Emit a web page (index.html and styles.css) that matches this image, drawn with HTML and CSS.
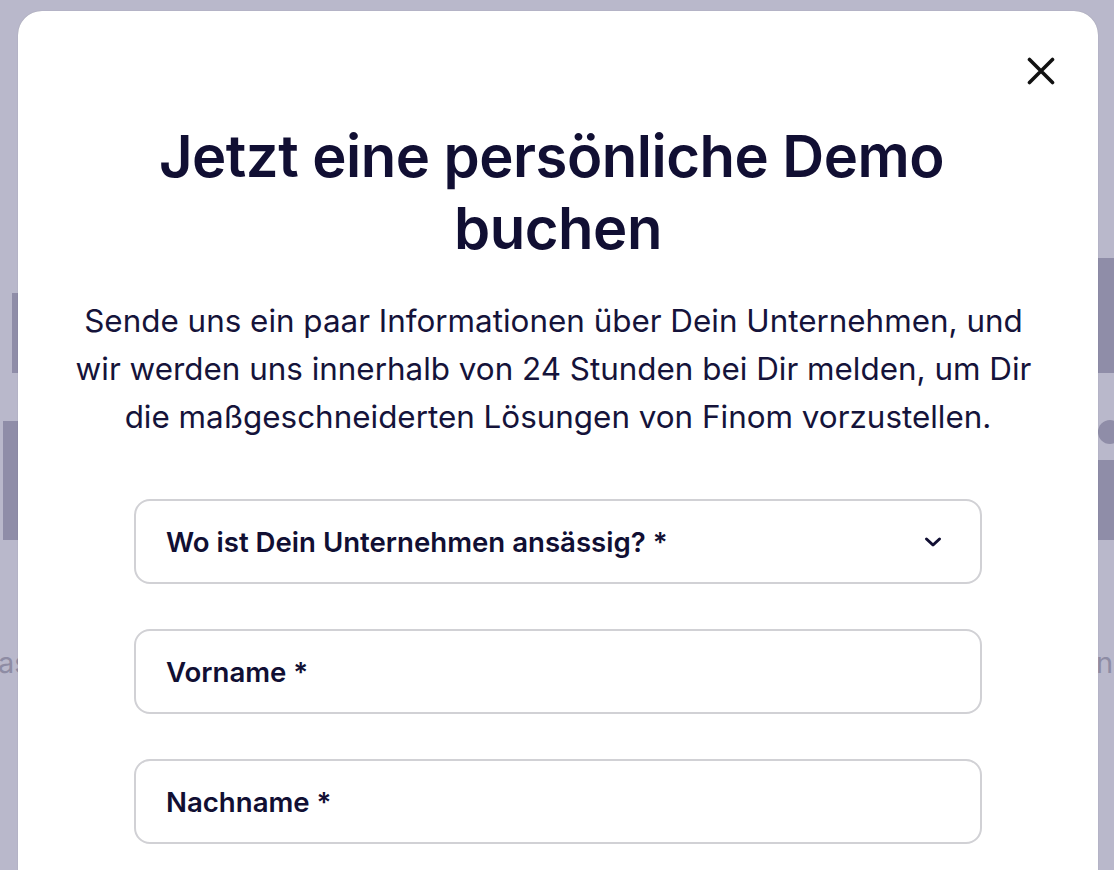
FILE: index.html
```html
<!DOCTYPE html>
<html lang="de">
<head>
<meta charset="utf-8">
<title>Demo buchen</title>
<link rel="stylesheet" href="styles.css">
</head>
<body>
<div class="backdrop" aria-hidden="true">
  <div class="bg-block bl1"></div>
  <div class="bg-block bl2"></div>
  <div class="bg-block br1"></div>
  <div class="bg-dot br-dot"></div>
  <div class="bg-block br2"></div>
  <span class="bg-text bt-left">as</span>
  <span class="bg-text bt-right">n</span>
</div>
<div class="modal">
  <button class="close" aria-label="Schließen">
    <svg width="28" height="28" viewBox="0 0 28 28"><path d="M2.5 2.5 L25.5 25.5 M25.5 2.5 L2.5 25.5" stroke="#111" stroke-width="3.6" stroke-linecap="round" fill="none"/></svg>
  </button>
  <h1 class="title"><span class="title-line1">Jetzt eine persönliche Demo</span>buchen</h1>
  <p class="lead"><span class="lead-line">Sende uns ein paar Informationen über Dein Unternehmen, und</span><span class="lead-line">wir werden uns innerhalb von 24 Stunden bei Dir melden, um Dir</span>die maßgeschneiderten Lösungen von Finom vorzustellen.</p>
  <form class="form">
    <div class="field select">
      <span class="label">Wo ist Dein Unternehmen ansässig? *</span>
      <svg class="chev" width="18" height="12" viewBox="0 0 18 12"><path d="M2.5 3 L9 9 L15.5 3" stroke="#110f33" stroke-width="3" stroke-linecap="round" stroke-linejoin="round" fill="none"/></svg>
    </div>
    <div class="field"><span class="label">Vorname *</span></div>
    <div class="field"><span class="label">Nachname *</span></div>
  </form>
</div>
</body>
</html>
```
FILE: styles.css
```css
html, body {
  margin: 0;
  padding: 0;
  height: 100%;
  overflow: hidden;
}
body {
  background: #b9b8cb;
  font-family: "Inter", "Lato", "DejaVu Sans", sans-serif;
  color: #110f33;
  position: relative;
}
.backdrop {
  position: absolute;
  inset: 0;
}
.bg-block {
  position: absolute;
  background: #8f8da8;
}
.bl1 { left: 12px; top: 293px; width: 20px; height: 80px; }
.bl2 { left: 3px; top: 421px; width: 30px; height: 119px; }
.br1 { left: 1090px; top: 258px; width: 40px; height: 115px; }
.br2 { left: 1090px; top: 460px; width: 40px; height: 80px; }
.bg-dot {
  position: absolute;
  background: #8f8da8;
  border-radius: 50%;
}
.br-dot { left: 1098px; top: 420px; width: 24px; height: 24px; }
.bg-text {
  position: absolute;
  top: 646px;
  font-size: 29px;
  color: #8e8ca4;
  line-height: 34px;
}
.bt-left { left: -2px; }
.bt-right { left: 1096px; }

.modal {
  position: relative;
  margin: 11px 0 0 18px;
  width: 1080px;
  height: 900px;
  background: #fff;
  border-radius: 24px;
  box-sizing: border-box;
  padding-top: 109px;
  display: flex;
  flex-direction: column;
  align-items: center;
  box-shadow: 0 0 1px rgba(0,0,0,0.25);
}
.close {
  position: absolute;
  top: 46px;
  right: 43px;
  width: 28px;
  height: 28px;
  padding: 0;
  border: 0;
  background: transparent;
  display: flex;
  align-items: center;
  justify-content: center;
}
.title {
  margin: 0;
  font-size: 58px;
  line-height: 72px;
  font-weight: 600;
  text-align: center;
  letter-spacing: -0.5px;
}
.title-line1 {
  display: block;
  padding-right: 13px;
}
.lead {
  margin: 33px 0 0;
  font-size: 31.4px;
  line-height: 48px;
  font-weight: 400;
  text-align: center;
  color: #15133a;
}
.lead-line {
  display: block;
  padding-right: 9px;
}
.form {
  margin-top: 58px;
  display: flex;
  flex-direction: column;
  gap: 45px;
}
.field {
  width: 848px;
  height: 85px;
  box-sizing: border-box;
  border: 2px solid #d1d1d5;
  border-radius: 16px;
  padding: 0 38px 0 30px;
  display: flex;
  align-items: center;
  justify-content: space-between;
}
.label {
  font-size: 27.6px;
  font-weight: 600;
  color: #110f33;
}
.chev { display: block; }
```
